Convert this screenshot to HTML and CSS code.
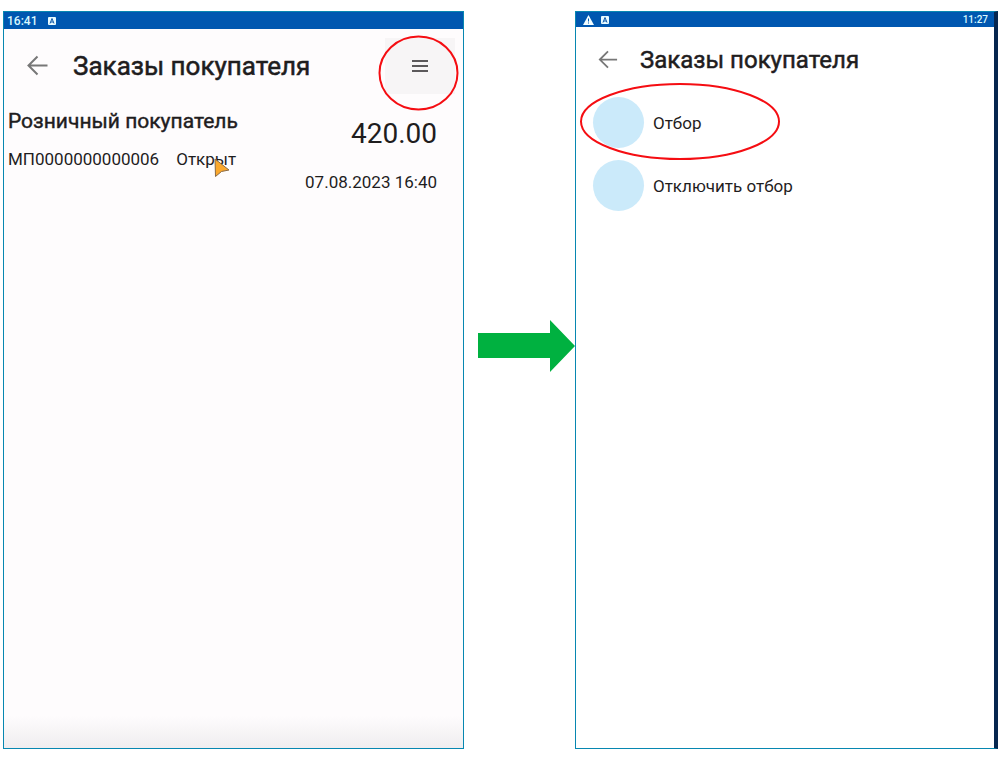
FILE: index.html
```html
<!DOCTYPE html>
<html lang="ru">
<head>
<meta charset="utf-8">
<meta name="viewport" content="width=device-width, initial-scale=1">
<title>Заказы покупателя</title>
<link rel="stylesheet" href="styles.css">
</head>
<body>
<main class="board">
  <section class="screen screen-orders">
    <div class="status">
      <span>16:41</span>
      <svg class="status-app" viewBox="0 0 8 8"><rect width="8" height="8" rx="1" fill="#e8fbff"/><path d="M2 6.500L4 1.500L6 6.500M3 5H5" fill="none" stroke="#0a55a8"/></svg>
    </div>
    <header class="bar">
      <button class="back" type="button" aria-label="Назад">
        <svg viewBox="0 0 22 22"><path d="M21.500 10.500H2.500M11.500 1.500L2.500 10.500L11.500 19.500" fill="none" stroke="#777" stroke-width="2"/></svg>
      </button>
      <h1 class="title">Заказы покупателя</h1>
      <button class="menu" type="button" aria-label="Меню">
        <svg viewBox="0 0 16 12"><path d="M0 1H16M0 6H16M0 11H16" stroke="#5c595b" stroke-width="2"/></svg>
        <svg class="mark mark-menu" viewBox="0 0 80 76"><ellipse cx="40.500" cy="38" rx="39" ry="36.500"/></svg>
      </button>
    </header>
    <article class="order">
      <div class="order-info">
        <h2 class="customer">Розничный покупатель</h2>
        <p class="details"><span>МП0000000000006</span><span class="state">Открыт<svg class="pointer" viewBox="0 0 16 20"><path d="M1 1L15 12L7.500 13.500L1.500 18.500Z" fill="#fba82c" stroke="#8b6b45"/></svg></span></p>
      </div>
      <div class="order-sum">
        <p class="sum">420.00</p>
        <p class="date">07.08.2023 16:40</p>
      </div>
    </article>
  </section>

  <div class="step">
    <svg class="arrow" viewBox="0 0 98 52"><path d="M1 13H73V0L98 26L73 52V38H1Z" fill="#00b140"/></svg>
  </div>

  <section class="screen screen-filter">
    <div class="status">
      <svg class="status-warn" viewBox="0 0 11 10"><path d="M5.500 0L11 10H0Z" fill="#f2fdff"/><path d="M5.500 3.500V6.500M5.500 7.500V8.500" stroke="#0057b0"/></svg>
      <svg class="status-app" viewBox="0 0 8 8"><rect width="8" height="8" rx="1" fill="#e8fbff"/><path d="M2 6.500L4 1.500L6 6.500M3 5H5" fill="none" stroke="#0a55a8"/></svg>
      <span class="clock">11:27</span>
    </div>
    <header class="bar">
      <button class="back" type="button" aria-label="Назад">
        <svg viewBox="0 0 22 22"><path d="M21 10.500H2M11 1.500L2 10.500L11 19.500" fill="none" stroke="#777" stroke-width="2"/></svg>
      </button>
      <h1 class="title">Заказы покупателя</h1>
    </header>
    <nav class="actions">
      <button class="action" type="button"><span class="dot"></span>Отбор
        <svg class="mark mark-action" viewBox="0 0 200 78"><ellipse cx="100" cy="38.500" rx="99" ry="37.500"/></svg>
      </button>
      <button class="action" type="button"><span class="dot"></span>Отключить отбор</button>
    </nav>
  </section>
</main>
</body>
</html>
```
FILE: styles.css
```css
* {
  box-sizing: border-box;
}

body {
  margin: 0;
  background: #fff;
  color: #1f1d1e;
  font-family: Roboto, "Noto Sans", sans-serif;
}

h1, h2, p {
  margin: 0;
  font-weight: 400;
}

h1, h2 {
  -webkit-text-stroke: thin currentColor;
}

svg {
  display: block;
}

button {
  padding: 0;
  border: 0;
  background: none;
  color: inherit;
  font: inherit;
}

.board {
  display: grid;
  grid-template-columns: 461fr 111fr 423fr;
  min-height: 100vh;
  padding: 11px 2px 12px 3px;
}

.screen {
  border: 1px solid #0787b1;
  min-width: 0;
}

.screen-orders {
  background: linear-gradient(to top, #efedef, #fefcfd 32px);
}

.screen-filter {
  border-right: 4px solid #06264f;
}

.status {
  display: flex;
  align-items: center;
  gap: 11px;
  height: 17px;
  padding: 0 3px;
  background: #0057b0;
  color: #d8f8ff;
  font-size: 12px;
  font-weight: 500;
  line-height: 16px;
}

.screen-filter .status {
  gap: 7px;
  height: 15px;
  padding: 0 6px 0 7px;
  font-size: 10px;
}

.status-app {
  width: 8px;
  height: 8px;
}

.status-warn {
  width: 11px;
  height: 10px;
}

.clock {
  margin-left: auto;
}

.bar {
  display: flex;
  align-items: center;
  height: 74px;
  padding: 0 8px 0 22px;
}

.screen-filter .bar {
  height: 65px;
}

.back svg {
  width: 22px;
  height: 22px;
}

.screen-filter .back svg {
  width: 20px;
  height: 20px;
}

.title {
  margin-left: 25px;
  font-size: 26px;
  line-height: 32px;
  white-space: nowrap;
}

.screen-filter .title {
  margin-left: 22px;
  font-size: 24px;
}

.menu {
  position: relative;
  display: grid;
  place-items: center;
  width: 70px;
  height: 56px;
  margin-left: auto;
  background: #f7f5f6;
}

.menu svg {
  width: 16px;
  height: 12px;
}

.mark {
  position: absolute;
  overflow: visible;
  fill: none;
  stroke: #f50d12;
  stroke-width: 2;
}

.menu .mark-menu {
  top: -3px;
  left: -7px;
  width: 80px;
  height: 76px;
}

.order {
  display: flex;
  justify-content: space-between;
  padding: 4px 26px 0 4px;
}

.customer {
  font-size: 21px;
  line-height: 28px;
}

.details {
  display: flex;
  gap: 17px;
  margin-top: 14px;
  font-size: 17px;
  line-height: 20px;
}

.state {
  position: relative;
}

.pointer {
  position: absolute;
  top: 9px;
  left: 38px;
  width: 16px;
  height: 20px;
}

.order-sum {
  padding-top: 9px;
  text-align: right;
}

.sum {
  font-size: 28px;
  line-height: 36px;
}

.date {
  margin-top: 20px;
  font-size: 17px;
  line-height: 20px;
}

.step {
  display: flex;
  align-items: center;
  justify-content: flex-end;
  padding-bottom: 68px;
}

.arrow {
  width: 98px;
  height: 52px;
}

.actions {
  display: grid;
  gap: 12px;
  padding: 5px 17px;
}

.action {
  position: relative;
  display: flex;
  align-items: center;
  gap: 9px;
  font-size: 17px;
  line-height: 20px;
}

.dot {
  width: 51px;
  height: 51px;
  border-radius: 50%;
  background: #cbeafa;
}

.mark-action {
  top: -14px;
  left: -13px;
  width: 200px;
  height: 78px;
}
```
